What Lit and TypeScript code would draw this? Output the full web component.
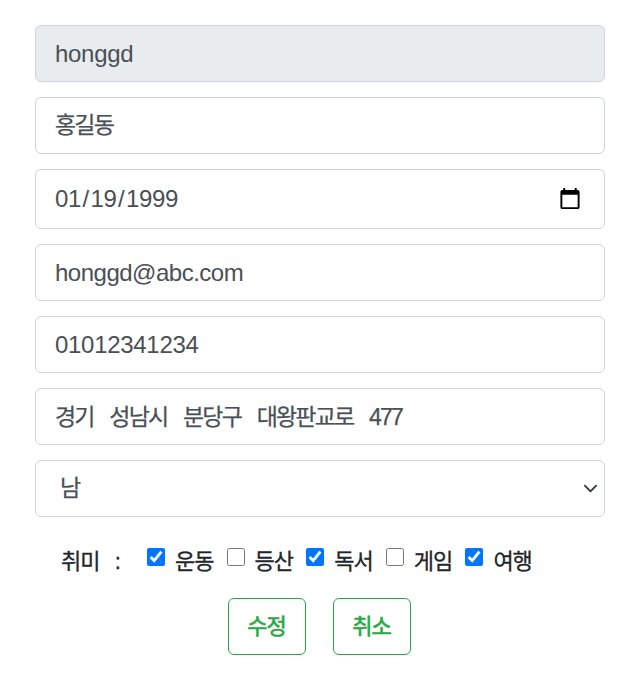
import { LitElement, html, css } from "lit";
import { customElement } from "lit/decorators.js";

const hobbies: [string, boolean][] = [
  ["운동", true],
  ["등산", false],
  ["독서", true],
  ["게임", false],
  ["여행", true],
];

@customElement("app-root")
export class AppRoot extends LitElement {
  static styles = css`
    :host {
      display: block;
      font-family: "Liberation Sans", "Noto Sans CJK KR", sans-serif;
      color: #212529;
    }
    form {
      display: flex;
      flex-direction: column;
      gap: 15px;
      width: 570px;
      margin: 0 auto 0 35px;
      padding: 25px 0 24px;
    }
    .control {
      display: block;
      box-sizing: border-box;
      width: 100%;
      height: 57px;
      padding: 0 19px;
      font: 400 24px "Liberation Sans", "Noto Sans CJK KR", sans-serif;
      letter-spacing: -0.3px;
      color: #495057;
      background: #fff;
      border: 1px solid #ced4da;
      border-radius: 6px;
      outline: none;
      margin: 0;
    }
    .control.date {
      height: 60px;
      padding: 0 20px 0 18px;
    }
    .control.date::-webkit-datetime-edit-text {
      padding: 0 0.5px;
    }
    .control.email {
      letter-spacing: -0.5px;
    }
    .control.korean {
      padding-bottom: 5px;
      font-size: 23px;
      letter-spacing: -1.8px;
      -webkit-text-stroke: 0.25px #495057;
    }
    .control.address {
      padding-bottom: 4px;
      font-size: 23px;
      letter-spacing: -1.8px;
      word-spacing: 11px;
      -webkit-text-stroke: 0.25px #495057;
    }
    .control:disabled,
    .control[readonly] {
      background: #e9ecef;
      opacity: 1;
    }
    select.control {
      appearance: none;
      padding: 0 0 2px 24px;
      font-size: 23px;
      -webkit-text-stroke: 0.25px #495057;
      background-image: url("data:image/svg+xml,%3csvg xmlns='http://www.w3.org/2000/svg' viewBox='0 0 16 16'%3e%3cpath fill='none' stroke='%23343a40' stroke-linecap='round' stroke-linejoin='round' stroke-width='2' d='M2 5l6 6 6-6'/%3e%3c/svg%3e");
      background-repeat: no-repeat;
      background-position: right 6px center;
      background-size: 15px 15px;
    }
    .hobby {
      display: flex;
      align-items: center;
      height: 38px;
      padding: 4px 0 0 26px;
      box-sizing: border-box;
      margin-top: 9px;
      font-size: 22px;
      line-height: 30px;
      letter-spacing: -1px;
      -webkit-text-stroke: 0.3px #212529;
    }
    .title {
      width: 86px;
      white-space: pre;
      word-spacing: 2.5px;
    }
    .hobby label {
      display: flex;
      align-items: center;
      width: 79.6px;
      flex: none;
    }
    .hobby input {
      width: 18px;
      height: 18px;
      margin: 0 10px 10px 0;
      accent-color: #0075ff;
    }
    .actions {
      display: flex;
      justify-content: center;
      gap: 27px;
      margin-top: 4px;
      transform: translateX(-1px);
    }
    button {
      box-sizing: border-box;
      width: 78px;
      height: 57px;
      padding: 0 0 5px;
      font: 400 22px "Liberation Sans", "Noto Sans CJK KR", sans-serif;
      letter-spacing: -1px;
      color: #28a745;
      -webkit-text-stroke: 0.6px #28a745;
      background: #fff;
      border: 1px solid #28a745;
      border-radius: 6px;
    }
  `;

  render() {
    return html`
      <form>
        <input class="control" type="text" value="honggd" readonly />
        <input class="control korean" type="text" value="홍길동" />
        <input class="control date" type="date" value="1999-01-19" />
        <input class="control email" type="email" value="honggd@abc.com" />
        <input class="control" type="text" value="01012341234" />
        <input class="control address" type="text" value="경기 성남시 분당구 대왕판교로 477" />
        <select class="control">
          <option selected>남</option>
          <option>여</option>
        </select>
        <div class="hobby">
          <span class="title">취미  :</span>
          ${hobbies.map(
            ([name, on]) => html`<label><input type="checkbox" ?checked=${on} />${name}</label>`
          )}
        </div>
        <div class="actions">
          <button type="button">수정</button>
          <button type="button">취소</button>
        </div>
      </form>
    `;
  }
}
